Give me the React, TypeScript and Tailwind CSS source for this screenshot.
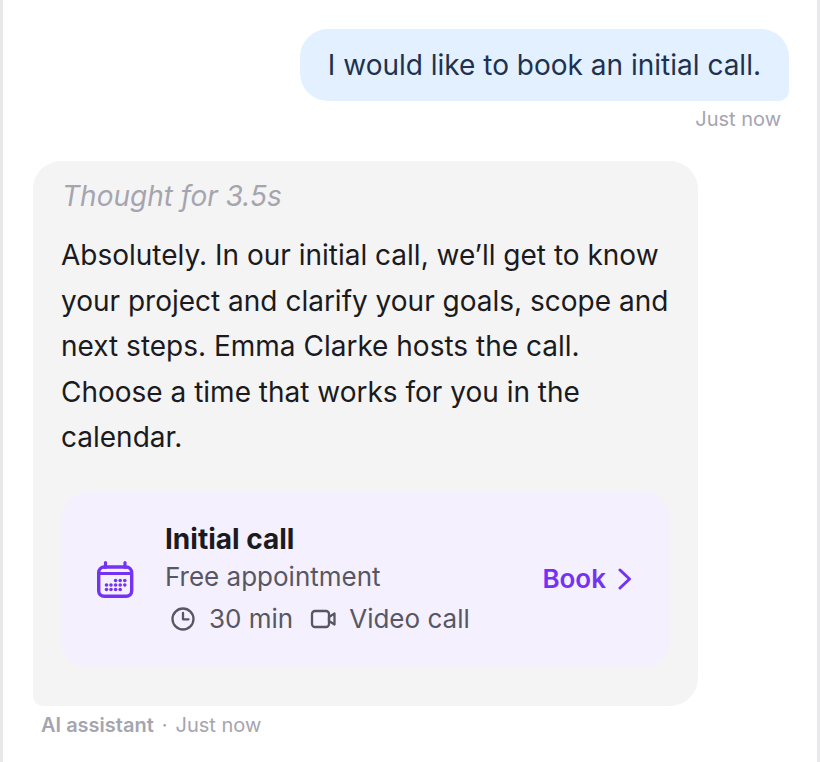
import React from 'react';

const CalendarIcon = () => (
  <svg width="38" height="38" viewBox="0 0 38 38" fill="none" className="text-[#7432f5]">
    <path d="M8.5 2.5v5M28 2.5v5" stroke="currentColor" strokeWidth="3.2" strokeLinecap="round" />
    <rect x="1.7" y="7" width="33" height="29.3" rx="5.5" stroke="currentColor" strokeWidth="3.4" />
    <path d="M2 13.5h33" stroke="currentColor" strokeWidth="3.2" />
    <g fill="currentColor">
      {[[18.6, 20.5], [23.2, 20.5], [27.8, 20.5], [9.5, 25], [14, 25], [18.6, 25], [23.2, 25], [27.8, 25], [9.5, 29.5], [14, 29.5], [18.6, 29.5], [23.2, 29.5]].map(([x, y]) => (
        <circle key={`${x}-${y}`} cx={x} cy={y} r="1.8" />
      ))}
    </g>
  </svg>
);

const ClockIcon = () => (
  <svg width="26" height="26" viewBox="0 0 26 26" fill="none" stroke="currentColor" strokeWidth="2.3" strokeLinecap="round" strokeLinejoin="round">
    <circle cx="13" cy="13" r="10.5" />
    <path d="M13 7v6.3h5.5" />
  </svg>
);

const VideoIcon = () => (
  <svg width="28" height="26" viewBox="0 0 28 26" fill="none" stroke="currentColor" strokeWidth="2.3" strokeLinecap="round" strokeLinejoin="round">
    <rect x="3" y="5" width="17" height="16" rx="3" />
    <path d="M20 11l5.5-3.5v11L20 15z" />
  </svg>
);

const ChevronIcon = () => (
  <svg width="14" height="22" viewBox="0 0 14 22" fill="none" stroke="currentColor" strokeWidth="3" strokeLinecap="round" strokeLinejoin="round">
    <path d="M2 2l9.5 9-9.5 9" />
  </svg>
);

export default function App() {
  return (
    <div className="h-[762px] overflow-hidden bg-white border-x-[3px] border-[#e8e8ea] pl-[30px] pr-[28px] pt-[29px] font-['Inter',sans-serif]">
      {/* User message */}
      <div className="flex flex-col items-end">
        <div className="rounded-[28px] rounded-br-[10px] bg-[#e2f0ff] px-[28px] h-[72px] flex items-center text-[28px] text-[#1e3250]">
          I would like to book an initial call.
        </div>
        <div className="mt-[5px] pr-[8px] text-[20px] leading-[26px] text-[#a5a5af]">Just now</div>
      </div>

      {/* Assistant message */}
      <div className="mt-[29px] w-[665px] h-[545px] rounded-[28px] rounded-bl-[10px] bg-[#f4f4f4] pl-[28px] pr-[28px] pt-[17px]">
        <div className="pl-[1px] text-[28px] leading-[36px] italic text-[#a5a5af]">Thought for 3.5s</div>
        <p className="mt-[19px] text-[28px] leading-[45.5px] text-[#1a1a20]">
          Absolutely. In our initial call, we’ll get to know your project and clarify your goals, scope and next steps. Emma Clarke hosts the call. Choose a time that works for you in the calendar.
        </p>
        <div className="mt-[30px] h-[177px] rounded-[28px] bg-[#f4f0fe] flex items-center pl-[36px] pr-[38px]">
          <CalendarIcon />
          <div className="ml-[30px] flex-1 -mt-[1px]">
            <div className="text-[28px] leading-[36px] font-bold text-[#1a1a20]">Initial call</div>
            <div className="mt-[2px] text-[26px] leading-[36px] text-[#575763]">Free appointment</div>
            <div className="mt-[6px] flex items-center text-[26px] leading-[36px] text-[#575763]">
              <span className="ml-[5px]"><ClockIcon /></span>
              <span className="ml-[13px]">30 min</span>
              <span className="ml-[16px]"><VideoIcon /></span>
              <span className="ml-[12px]">Video call</span>
            </div>
          </div>
          <div className="flex items-center gap-[12px] text-[26px] font-semibold text-[#7432f5] -mt-[1px]">
            Book
            <ChevronIcon />
          </div>
        </div>
      </div>
      <div className="mt-[6px] pl-[8px] text-[20px] leading-[26px] text-[#a5a5af]">
        <span className="font-semibold">AI assistant</span>
        <span className="mx-[8px]">·</span>
        Just now
      </div>
    </div>
  );
}
